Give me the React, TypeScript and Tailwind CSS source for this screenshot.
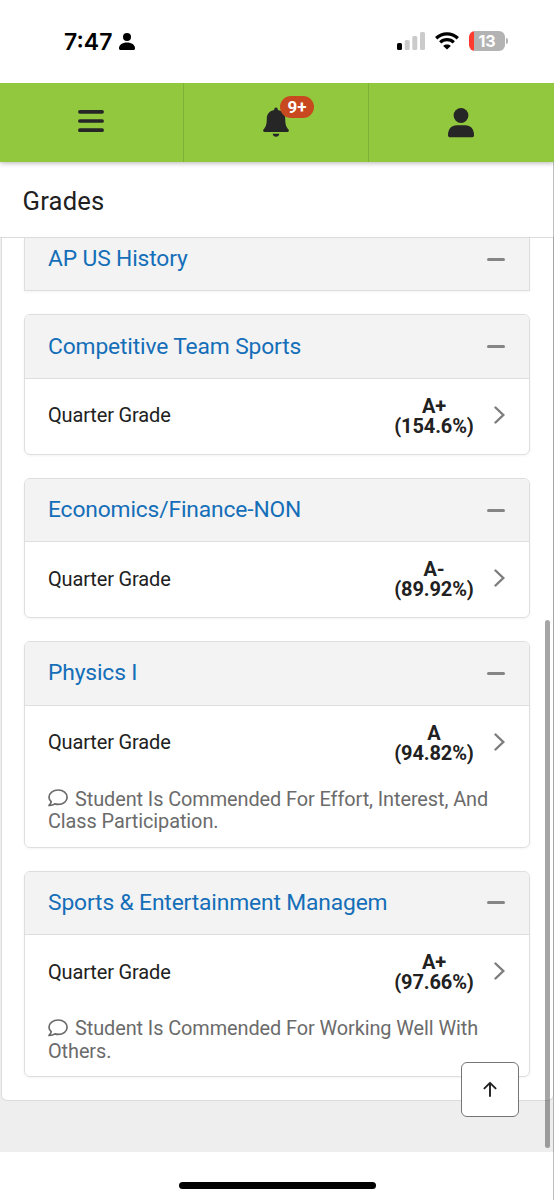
import React from 'react';
import { clsx } from 'clsx';

type Course = {
  name: string;
  grade?: string;
  percent?: string;
  comment?: string;
};

const courses: Course[] = [
  { name: 'AP US History' },
  { name: 'Competitive Team Sports', grade: 'A+', percent: '154.6%' },
  { name: 'Economics/Finance-NON', grade: 'A-', percent: '89.92%' },
  {
    name: 'Physics I',
    grade: 'A',
    percent: '94.82%',
    comment: 'Student Is Commended For Effort, Interest, And Class Participation.',
  },
  {
    name: 'Sports & Entertainment Managem',
    grade: 'A+',
    percent: '97.66%',
    comment: 'Student Is Commended For Working Well With Others.',
  },
];

export default function App() {
  return (
    <div className="relative flex h-[1200px] w-[554px] flex-col overflow-hidden bg-white font-['Roboto',sans-serif] text-[#212121]">
      <StatusBar />
      <NavBar />
      <div className="flex h-[76px] shrink-0 items-center border-b border-[#dcdcdc] pl-[22.5px] pt-[3px]">
        <h1 className="text-[25.6px] leading-8 tracking-[0.2px]">Grades</h1>
      </div>

      <main className="h-[914px] shrink-0 overflow-hidden bg-[#eeeeee]">
        <div className="ml-px flex h-[863px] flex-col gap-[23px] rounded-b-md border-x border-b border-[#dcdcdc] bg-white pl-[22px] pr-[23px]">
          {courses.map((course) => (
            <CourseCard key={course.name} course={course} />
          ))}
        </div>
      </main>

      <footer className="flex flex-1 items-end justify-center pb-[11px]">
        <div className="h-[7px] w-[197px] rounded-full bg-black" />
      </footer>

      <button className="absolute left-[461px] top-[1062px] flex h-[55px] w-[58px] items-center justify-center rounded-md border border-[#757575] bg-white">
        <svg className="mb-[2px]" width="14" height="16" viewBox="0 0 14 16" fill="none" stroke="#212121" strokeWidth="1.9">
          <path d="M7 15V2M1.4 7.4 7 1.8l5.6 5.6" strokeLinecap="round" strokeLinejoin="round" />
        </svg>
      </button>
      {/* Scroll thumb */}
      <div className="absolute left-[545px] top-[620px] h-[528px] w-[5px] rounded-full bg-black/35" />
      <div className="absolute right-0 top-0 h-full w-px bg-black/25" />
    </div>
  );
}

function StatusBar() {
  return (
    <div className="z-20 flex h-[83px] shrink-0 items-center justify-between bg-white pl-[64px] pr-[46px]">
      <div className="flex items-center gap-[7px]">
        <span className="pt-px font-['Inter',sans-serif] text-[23px] font-semibold leading-none text-black">7:47</span>
        <svg width="16" height="17" viewBox="0 0 16 17" fill="black">
          <circle cx="8" cy="4" r="4" />
          <path d="M0 15.2C0 12 3.3 9.6 8 9.6s8 2.4 8 5.6c0 1.2-.6 1.8-1.8 1.8H1.8C.6 17 0 16.4 0 15.2z" />
        </svg>
      </div>
      <div className="flex items-center">
        <svg className="-mt-px" width="28" height="18" viewBox="0 0 28 18">
          <rect x="0" y="11" width="5" height="7" rx="1.5" fill="black" />
          <rect x="7.7" y="8" width="5" height="10" rx="1.5" fill="#cbcbcb" />
          <rect x="15.3" y="4" width="5" height="14" rx="1.5" fill="#cbcbcb" />
          <rect x="23" y="0" width="5" height="18" rx="1.5" fill="#cbcbcb" />
        </svg>
        <svg className="-mt-px ml-[10px]" width="24" height="18" viewBox="0 0 24 18" fill="none" stroke="black">
          <path d="M1.2 6.2c6-5.7 15.6-5.7 21.6 0" strokeWidth="3.3" />
          <path d="M5.2 10.4c3.8-3.6 9.8-3.6 13.6 0" strokeWidth="3.2" />
          <path d="M12 17.6 8.2 13.9c2-1.9 5.6-1.9 7.6 0z" fill="black" stroke="none" />
        </svg>
        <div className="-mt-px ml-[10px] flex h-[20px] w-[36px] items-center justify-center rounded-[6px] bg-[linear-gradient(to_right,#ff3b30_5px,#b3b3b3_5px)] font-['Inter',sans-serif] text-[16px] font-bold leading-none text-white">
          13
        </div>
        <div className="-mt-px ml-[1px] h-[6px] w-[2px] rounded-r-full bg-[#b3b3b3]" />
      </div>
    </div>
  );
}

function NavBar() {
  return (
    <nav className="z-10 grid h-[79px] shrink-0 grid-cols-[184px_185px_185px] bg-[#92c83e] shadow-[0_1px_5px_rgba(0,0,0,0.3)]">
      <div className="flex items-center justify-center border-r border-[#7fb037] pb-[3px] pr-px">
        <svg width="26" height="24" viewBox="0 0 26 24" stroke="#262626" strokeWidth="3.7" strokeLinecap="round">
          <path d="M1.9 2.8h22.2M1.9 12h22.2M1.9 21.2h22.2" />
        </svg>
      </div>
      <div className="relative flex items-center justify-center border-r border-[#7fb037] pb-px">
        <svg width="26" height="30" viewBox="0 0 26 30" fill="#262626">
          <path d="M11.2 2.2a1.8 1.8 0 0 1 3.6 0v.7c4.8.9 7.4 4.2 7.400 8.600 0 6 1 8.400 3.200 10.900 1 1.200.4 2.500-.9 2.500H1.500c-1.300 0-1.900-1.300-.9-2.500 2.200-2.500 3.200-4.900 3.200-10.900 0-4.400 2.600-7.700 7.400-8.600z" />
          <path d="M9.600 26.700h6.800c-.4 1.900-1.600 3-3.400 3s-3-1.100-3.400-3z" />
        </svg>
        <span className="absolute left-[96px] top-[13px] flex h-[22px] w-[34px] items-center justify-center rounded-full bg-[#c8491f] text-[17px] font-bold leading-none text-white">
          9+
        </span>
      </div>
      <div className="flex items-center justify-center pr-px">
        <svg width="26" height="30" viewBox="0 0 26 30" fill="#262626">
          <circle cx="13" cy="7.5" r="7.4" />
          <path d="M0 27c0-6.2 3.6-9.8 8.6-9.8h8.8c5 0 8.6 3.6 8.6 9.8 0 1.5-.8 2.3-2.1 2.3H2.1C.8 29.3 0 28.5 0 27z" />
        </svg>
      </div>
    </nav>
  );
}

function CommentIcon() {
  return (
    <svg
      className="-mt-[4px] mr-[7px] inline-block align-middle"
      width="20"
      height="18"
      viewBox="0 0 20 18"
      fill="none"
      stroke="#6b6b6b"
      strokeWidth="1.7"
      strokeLinejoin="round"
    >
      <path d="M3.200 12.600C1.800 11.400 1 9.900 1 8.200 1 4.200 5 1 10.200 1s8.900 3.200 8.900 7.200-3.700 7.200-8.900 7.200c-1.200 0-2.300-.2-3.300-.5-1.500 1.200-3.600 1.700-5.900 1.600 1.300-1.100 2-2.500 2.200-3.900z" />
    </svg>
  );
}

function CourseCard({ course }: { course: Course }) {
  const collapsed = !course.grade;

  return (
    <section
      className={clsx(
        'shrink-0 overflow-hidden border border-[#dedede] shadow-[0_1px_3px_rgba(0,0,0,0.05)]',
        collapsed && 'h-[53.4px] border-t-0',
        !collapsed && 'rounded-md',
        !collapsed && !course.comment && 'h-[140.4px]',
        course.comment && 'h-[206.5px]'
      )}
    >
      <header
        className={clsx(
          'flex items-center justify-between bg-[#f3f3f3] pl-[23px] pr-[24px]',
          collapsed ? 'h-full pb-[11px]' : 'h-[63.5px] border-b border-[#dedede] pb-px'
        )}
      >
        <h2 className="pt-px text-[22.8px] leading-7 tracking-[-0.14px] text-[#146eb8]">{course.name}</h2>
        <span className="mt-px h-[3px] w-[18px] rounded-full bg-[#858585]" />
      </header>

      {!collapsed && (
        <div className="flex h-[75px] items-center pl-[23px] pr-[24px]">
          <span className="flex-1 pb-[2px] text-[20px] tracking-[-0.15px]">Quarter Grade</span>
          <p className="w-[80px] pb-px text-center text-[20px] font-bold leading-5 tracking-[-0.12px] whitespace-nowrap">
            {course.grade}
            <br />({course.percent})
          </p>
          <svg className="mb-[3px] ml-[20px]" width="11" height="18" viewBox="0 0 11 18" fill="none">
            <path d="M1.5 1.5 9.3 9l-7.8 7.5" stroke="#7d7d7d" strokeWidth="2.4" strokeLinecap="round" />
          </svg>
        </div>
      )}

      {course.comment && (
        <p className="pl-[23px] pr-[20px] pt-[8px] text-[19.9px] leading-[22.7px] tracking-[-0.08px] text-[#6b6b6b]">
          <CommentIcon />
          {course.comment}
        </p>
      )}
    </section>
  );
}
